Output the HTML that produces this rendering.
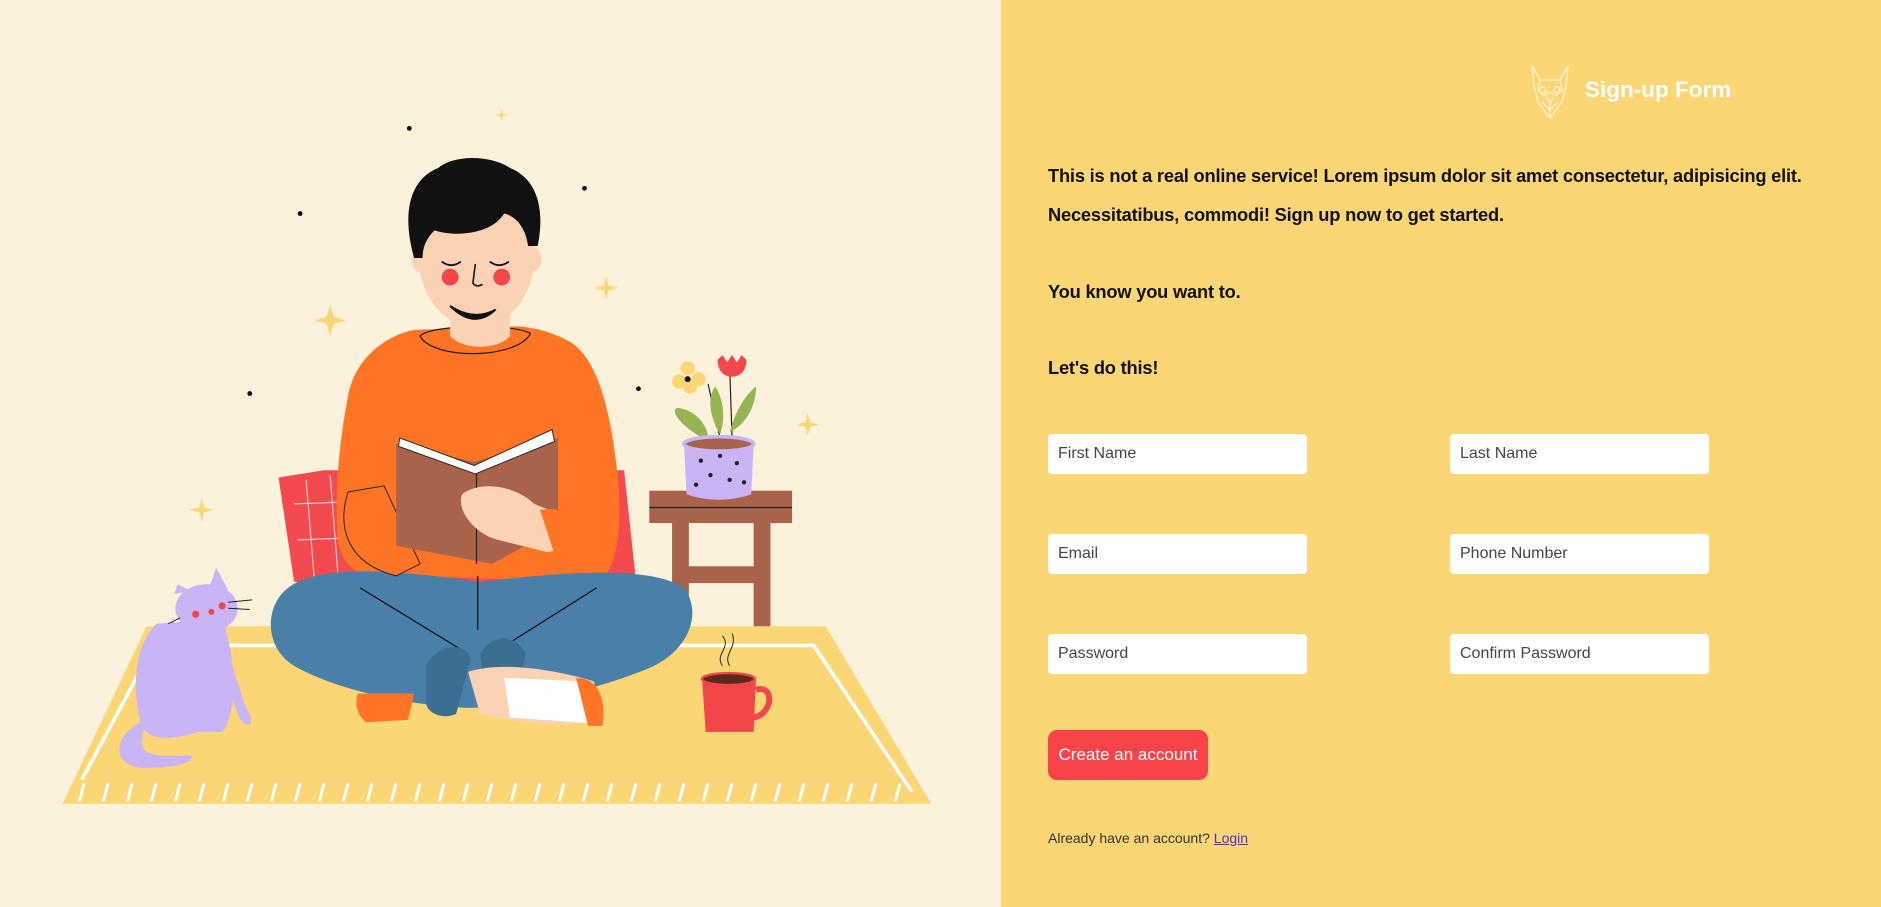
<!DOCTYPE html>
<html><head><meta charset="utf-8"><style>
*{margin:0;padding:0;box-sizing:border-box}
html,body{width:1881px;height:907px;overflow:hidden;background:linear-gradient(to right,#fcf1da 1001px,#fbd674 1001px)}
body{font-family:"Liberation Sans",sans-serif;position:relative}
#left{position:absolute;left:0;top:0;width:1001px;height:907px;background:#fcf1da}
#left svg{display:block}
#right{position:absolute;left:1001px;top:0;width:880px;height:907px;background:#fbd674}
.abs{position:absolute}
.p{position:absolute;left:1048px;font-size:18.3px;font-weight:bold;color:#111;white-space:nowrap;letter-spacing:-0.2px}
.in{position:absolute;width:259px;height:40px;background:#fff;border-radius:4px;font-size:16px;color:#444;padding:11px 0 0 10px}
</style></head><body>
<div id="left">
<svg width="1001" height="907" viewBox="0 0 834 756" xmlns="http://www.w3.org/2000/svg">
<polygon points="122,522 688,522 776,670 52,670" fill="#fbd674"/>
<polyline points="128,538 678,538 760,660" fill="none" stroke="#fff" stroke-width="3"/>
<line x1="128" y1="538" x2="68" y2="650" stroke="#fff" stroke-width="3"/>
<g stroke="#fff" stroke-width="2.5">
<line x1="70" y1="653" x2="66" y2="668"/><line x1="90" y1="653" x2="86" y2="668"/><line x1="110" y1="653" x2="106" y2="668"/><line x1="130" y1="653" x2="126" y2="668"/><line x1="150" y1="653" x2="146" y2="668"/><line x1="170" y1="653" x2="166" y2="668"/><line x1="190" y1="653" x2="186" y2="668"/><line x1="210" y1="653" x2="206" y2="668"/><line x1="230" y1="653" x2="226" y2="668"/><line x1="250" y1="653" x2="246" y2="668"/><line x1="270" y1="653" x2="266" y2="668"/><line x1="290" y1="653" x2="286" y2="668"/><line x1="310" y1="653" x2="306" y2="668"/><line x1="330" y1="653" x2="326" y2="668"/><line x1="350" y1="653" x2="346" y2="668"/><line x1="370" y1="653" x2="366" y2="668"/><line x1="390" y1="653" x2="386" y2="668"/><line x1="410" y1="653" x2="406" y2="668"/><line x1="430" y1="653" x2="426" y2="668"/><line x1="450" y1="653" x2="446" y2="668"/><line x1="470" y1="653" x2="466" y2="668"/><line x1="490" y1="653" x2="486" y2="668"/><line x1="510" y1="653" x2="506" y2="668"/><line x1="530" y1="653" x2="526" y2="668"/><line x1="550" y1="653" x2="546" y2="668"/><line x1="570" y1="653" x2="566" y2="668"/><line x1="590" y1="653" x2="586" y2="668"/><line x1="610" y1="653" x2="606" y2="668"/><line x1="630" y1="653" x2="626" y2="668"/><line x1="650" y1="653" x2="646" y2="668"/><line x1="670" y1="653" x2="666" y2="668"/><line x1="690" y1="653" x2="686" y2="668"/><line x1="710" y1="653" x2="706" y2="668"/><line x1="730" y1="653" x2="726" y2="668"/><line x1="750" y1="653" x2="746" y2="668"/>
</g>
<rect x="560" y="430" width="14" height="92" fill="#a9634a"/>
<rect x="628" y="430" width="14" height="92" fill="#a9634a"/>
<rect x="565" y="472" width="70" height="14" fill="#a9634a"/>
<rect x="541" y="409" width="119" height="27" fill="#a9634a"/>
<line x1="541" y1="423" x2="660" y2="423" stroke="#222" stroke-width="1"/>
<path d="M600,365 L590,320 M610,365 L608,305" stroke="#222" stroke-width="1"/>
<path d="M585,365 C560,350 560,340 565,340 C580,342 590,355 590,365Z" fill="#96b552"/>
<path d="M600,362 C590,345 590,330 596,322 C604,335 604,350 600,362Z" fill="#96b552"/>
<path d="M608,360 C612,345 620,330 630,322 C630,340 620,355 608,360Z" fill="#96b552"/>
<circle cx="573" cy="307" r="6" fill="#fbd674"/><circle cx="582" cy="316" r="6" fill="#fbd674"/><circle cx="566" cy="318" r="6" fill="#fbd674"/><circle cx="575" cy="322" r="6" fill="#fbd674"/>
<circle cx="573" cy="316" r="2.5" fill="#111"/>
<path d="M598,300 L602,296 L606,302 L610,296 L614,302 L618,296 L622,300 C622,310 616,314 610,314 C602,314 598,308 598,300Z" fill="#f2464a"/>
<path d="M570,370 L628,370 L626,412 C610,418 588,418 572,412Z" fill="#c9b5f5"/>
<ellipse cx="599" cy="370" rx="29" ry="6" fill="#a9634a" stroke="#c9b5f5" stroke-width="3"/>
<g fill="#222"><circle cx="584" cy="384" r="1.8"/><circle cx="600" cy="380" r="1.8"/><circle cx="614" cy="386" r="1.8"/><circle cx="592" cy="396" r="1.8"/><circle cx="608" cy="400" r="1.8"/><circle cx="580" cy="404" r="1.8"/><circle cx="620" cy="402" r="1.8"/></g>
<path d="M232,398 L270,392 L520,392 L530,485 L245,485Z" fill="#f24a4e"/>
<g stroke="#fff" stroke-width="1" opacity=".7"><line x1="245" y1="420" x2="300" y2="418"/><line x1="248" y1="450" x2="300" y2="448"/><line x1="255" y1="400" x2="262" y2="485"/><line x1="275" y1="396" x2="282" y2="485"/></g>
<path d="M345,275 C320,280 295,300 290,330 C282,370 278,420 282,455 C290,480 310,485 330,480 L500,485 C515,470 518,440 515,400 C510,350 500,300 475,285 C460,276 440,272 430,272Z" fill="#ff7425"/>
<path d="M350,280 C360,300 430,300 442,278 C430,270 360,270 350,280Z" fill="#ff7425" stroke="#222" stroke-width="1"/>
<path d="M375,240 L375,280 C385,292 415,292 425,280 L425,240Z" fill="#fcd2b5"/>
<ellipse cx="397" cy="215" rx="48" ry="58" fill="#fcd2b5"/>
<ellipse cx="351" cy="216" rx="8" ry="11" fill="#fcd2b5"/>
<ellipse cx="443" cy="216" rx="8" ry="11" fill="#fcd2b5"/>
<path d="M345,215 C335,180 340,150 365,140 C380,128 410,130 425,140 C445,148 455,170 448,205 L440,205 C438,190 430,180 420,178 C410,195 380,198 362,192 C356,198 352,205 352,215Z" fill="#111"/>
<circle cx="375" cy="231" r="7" fill="#f2464a"/><circle cx="418" cy="231" r="7" fill="#f2464a"/>
<path d="M368,218 Q376,224 384,218 M408,218 Q416,224 424,218" stroke="#111" stroke-width="1.5" fill="none"/>
<path d="M396,220 L394,236 Q397,240 402,237" stroke="#111" stroke-width="1.3" fill="none"/>
<path d="M375,255 Q395,275 413,258 Q395,268 375,255Z" fill="#111" stroke="#111" stroke-width="1.5"/>
<path d="M240,490 C265,470 330,475 400,485 C460,478 540,470 570,490 C585,510 575,540 545,555 C500,575 430,590 390,590 C340,588 280,575 245,555 C220,540 220,505 240,490Z" fill="#4a7fa7"/>
<path d="M300,490 L390,545 M497,490 L410,545 M398,480 L398,525" stroke="#111" stroke-width="1" fill="none"/>
<path d="M355,555 C365,535 390,535 392,550 L380,595 C370,600 355,595 355,585Z" fill="#3c6e91"/>
<path d="M400,545 C410,528 430,528 438,545 L430,580 L405,580Z" fill="#3c6e91"/>
<path d="M390,560 C420,550 470,560 495,568 L500,600 C470,608 430,602 400,595Z" fill="#fcd2b5"/>
<path d="M420,565 L490,568 L495,603 L425,598Z" fill="#fff"/>
<path d="M480,565 C500,565 505,585 502,605 L490,605Z" fill="#ff7425"/>
<path d="M298,578 L345,578 L340,600 L305,602 C296,595 296,585 298,578Z" fill="#ff7425"/>
<path d="M290,410 C280,440 290,470 330,480 L350,470 L320,405Z" fill="#ff7425" stroke="#222" stroke-width="0.8"/>
<path d="M330,370 L395,385 L465,365 L465,440 L410,470 L330,455Z" fill="#a9634a"/>
<path d="M333,365 L395,388 L460,358 L462,368 L396,395 L332,372Z" fill="#fff" stroke="#222" stroke-width="0.8"/>
<line x1="397" y1="395" x2="397" y2="470" stroke="#222" stroke-width="1"/>
<path d="M385,412 C400,400 430,405 445,420 L470,430 C480,445 470,460 455,460 L415,450 C395,445 380,425 385,412Z" fill="#fcd2b5"/>
<path d="M450,425 C475,420 490,440 480,458 L462,462Z" fill="#ff7425"/>
<path d="M130,520 C110,540 110,580 118,605 C125,620 150,615 165,610 L185,610 C195,600 200,560 185,515Z" fill="#c9b5f5"/>
<path d="M120,600 C90,615 95,640 120,640 C140,640 160,638 160,630 C150,628 120,635 118,620Z" fill="#c9b5f5"/>
<path d="M185,560 L200,600 C210,610 212,600 205,590 L190,545Z" fill="#c9b5f5"/>
<ellipse cx="172" cy="507" rx="26" ry="20" fill="#c9b5f5"/>
<path d="M145,495 L148,487 L160,493Z M175,488 L180,473 L190,492Z" fill="#c9b5f5"/>
<circle cx="163" cy="512" r="3" fill="#f2464a"/><circle cx="185" cy="505" r="3" fill="#f2464a"/><circle cx="176" cy="510" r="2.5" fill="#f2464a"/>
<path d="M190,502 L210,500 M190,507 L208,508 M150,515 L140,520" stroke="#222" stroke-width=".8"/>
<path d="M585,565 L630,565 L628,610 L588,610Z" fill="#f2464a"/>
<ellipse cx="607" cy="566" rx="22" ry="5" fill="#5a2a1a" stroke="#f2464a" stroke-width="2"/>
<path d="M630,575 C645,570 645,595 628,598" stroke="#f2464a" stroke-width="5" fill="none"/>
<path d="M602,555 C595,545 610,540 602,530 M608,555 C602,545 615,540 610,528" stroke="#222" stroke-width=".8" fill="none"/>
<g fill="#fbd674">
<path d="M275,254 L278,264 L288,267 L278,270 L275,280 L272,270 L262,267 L272,264Z"/>
<path d="M505,230 L507,238 L515,240 L507,242 L505,250 L503,242 L495,240 L503,238Z"/>
<path d="M168,415 L170,423 L178,425 L170,427 L168,435 L166,427 L158,425 L166,423Z"/>
<path d="M673,345 L675,352 L682,354 L675,356 L673,363 L671,356 L664,354 L671,352Z"/>
<path d="M418,91 L419,95 L423,96 L419,97 L418,101 L417,97 L413,96 L417,95Z"/>
</g>
<g fill="#111"><circle cx="341" cy="107" r="2"/><circle cx="487" cy="157" r="2"/><circle cx="250" cy="178" r="2"/><circle cx="208" cy="328" r="2"/><circle cx="532" cy="324" r="2"/></g>
</svg>
</div>
<div id="right"></div>
<svg class="abs" style="left:1528px;top:62px" width="44" height="58" viewBox="0 0 44 58" fill="none" stroke="#fff" stroke-width="1" opacity=".85">
<path d="M4,4 L12,18 L32,18 L40,4 L38,24 L34,40 L22,56 L10,40 L6,24Z"/>
<path d="M12,18 L10,28 L16,34 L22,30 L28,34 L34,28 L32,18"/>
<circle cx="15" cy="28" r="3"/><circle cx="29" cy="28" r="3"/>
<path d="M18,36 L22,40 L26,36 M22,40 L22,56 M14,40 L22,48 L30,40"/>
</svg>
<div class="abs" style="left:1585px;top:77px;font-size:22.5px;font-weight:bold;color:#fff;white-space:nowrap">Sign-up Form</div>
<div class="p" style="top:165px">This is not a real online service! Lorem ipsum dolor sit amet consectetur, adipisicing elit.</div>
<div class="p" style="top:204px">Necessitatibus, commodi! Sign up now to get started.</div>
<div class="p" style="top:281px">You know you want to.</div>
<div class="p" style="top:357px">Let's do this!</div>
<div class="in" style="left:1048px;top:434px">First Name</div>
<div class="in" style="left:1450px;top:434px">Last Name</div>
<div class="in" style="left:1048px;top:534px">Email</div>
<div class="in" style="left:1450px;top:534px">Phone Number</div>
<div class="in" style="left:1048px;top:634px">Password</div>
<div class="in" style="left:1450px;top:634px">Confirm Password</div>
<div class="abs" style="left:1048px;top:730px;width:160px;height:50px;background:#f8434b;border-radius:9px;color:#fff;font-size:17px;text-align:center;line-height:50px">Create an account</div>
<div class="abs" style="left:1048px;top:830px;font-size:14px;color:#333;white-space:nowrap">Already have an account? <span style="color:#4b2fd6;text-decoration:underline">Login</span></div>
</body></html>
